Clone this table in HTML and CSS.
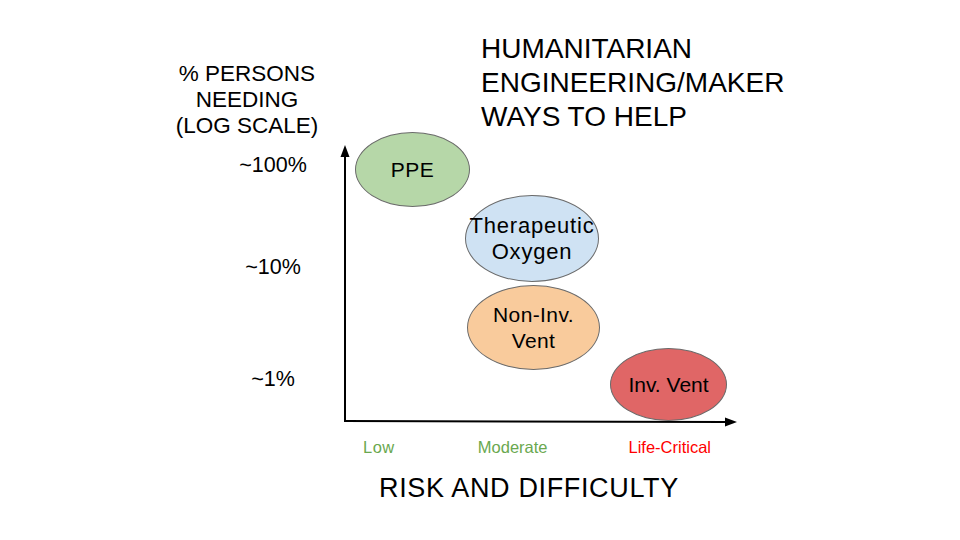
FILE: index.html
```html
<!DOCTYPE html>
<html lang="en">
<head>
<meta charset="utf-8">
<title>Humanitarian Engineering/Maker Ways to Help</title>
<link rel="stylesheet" href="styles.css">
</head>
<body>
<div class="slide">
  <div class="header">
    <div class="ytitle">% PERSONS<br>NEEDING<br>(LOG SCALE)</div>
    <div class="title">HUMANITARIAN<br>ENGINEERING/MAKER<br>WAYS TO HELP</div>
  </div>
  <div class="chart">
    <svg class="axes" width="960" height="290" viewBox="0 0 960 290">
      <line x1="345" y1="282" x2="345" y2="16" stroke="#000" stroke-width="2"/>
      <polygon points="345,5 340.5,17 349.5,17" fill="#000"/>
      <line x1="344" y1="281" x2="726" y2="282" stroke="#000" stroke-width="2"/>
      <polygon points="737,282 725,277.5 725,286.5" fill="#000"/>
    </svg>
    <div class="tick tick-100">~100%</div>
    <div class="tick tick-10">~10%</div>
    <div class="tick tick-1">~1%</div>
    <div class="node node-ppe">PPE</div>
    <div class="node node-oxy"><span class="wide">Therapeutic<br>Oxygen</span></div>
    <div class="node node-niv">Non-Inv.<br>Vent</div>
    <div class="node node-inv">Inv. Vent</div>
  </div>
  <div class="cats">
    <span class="cat cat-low">Low</span>
    <span class="cat cat-mod">Moderate</span>
    <span class="cat cat-life">Life-Critical</span>
  </div>
  <div class="xtitle">RISK AND DIFFICULTY</div>
</div>
</body>
</html>
```

FILE: styles.css
```css
html, body {
  margin: 0;
  padding: 0;
  background: #ffffff;
}

.slide {
  width: 960px;
  height: 540px;
  overflow: hidden;
  font-family: "Liberation Sans", Arial, sans-serif;
  color: #000;
  background: #fff;
}

.header {
  display: flex;
  align-items: flex-start;
  height: 140px;
}

.ytitle {
  margin-left: 157px;
  margin-top: 61px;
  width: 180px;
  text-align: center;
  font-size: 22.5px;
  line-height: 26px;
}

.title {
  margin-left: 144px;
  margin-top: 32px;
  font-size: 28px;
  line-height: 34px;
}

.chart {
  position: relative;
  height: 290px;
}

.axes {
  position: absolute;
  left: 0;
  top: 0;
}

.tick {
  position: absolute;
  left: 223px;
  width: 100px;
  text-align: center;
  font-size: 21.5px;
  line-height: 24px;
}

.tick-100 { top: 13px; }
.tick-10 { top: 115px; }
.tick-1 { top: 227px; }

.node {
  position: absolute;
  box-sizing: border-box;
  display: flex;
  align-items: center;
  justify-content: center;
  text-align: center;
  border: 1px solid #6b6b6b;
  border-radius: 50%;
  font-size: 21px;
  line-height: 26px;
}

.node-ppe {
  left: 355px;
  top: -8px;
  width: 115px;
  height: 75px;
  background: #b6d7a8;
  letter-spacing: 0.5px;
}

.node-oxy {
  left: 465px;
  top: 55px;
  width: 134px;
  height: 87px;
  background: #cfe2f3;
  font-size: 22px;
}

.wide {
  letter-spacing: 0.8px;
}

.node-niv {
  left: 467px;
  top: 145px;
  width: 133px;
  height: 85px;
  background: #f9cb9c;
  letter-spacing: 0.4px;
}

.node-inv {
  left: 610px;
  top: 208px;
  width: 117px;
  height: 73px;
  background: #e06666;
}

.cats {
  display: flex;
  margin-top: 7px;
  padding-left: 363px;
  font-size: 16.5px;
  line-height: 20px;
}

.cat-low { color: #6aa84f; letter-spacing: 0.5px; }
.cat-mod { color: #6aa84f; margin-left: 83px; }
.cat-life { color: #ff0000; margin-left: 81px; }

.xtitle {
  margin-top: 15px;
  padding-left: 379px;
  font-size: 27px;
  line-height: 32px;
  letter-spacing: 0.65px;
}
```
